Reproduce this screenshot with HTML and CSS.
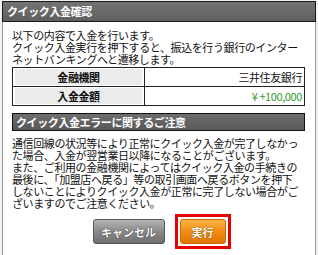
FILE: index.html
```html
<!DOCTYPE html>
<html lang="ja">
<head>
<meta charset="utf-8">
<link rel="stylesheet" href="styles.css">
</head>
<body>
<div class="dialog">
  <div class="title">クイック入金確認</div>
  <div class="panel">
    <p class="lead">以下の内容で入金を行います。<br>クイック入金実行を押下すると、振込を行う銀行のインター<br>ネットバンキングへと遷移します。</p>
    <table class="info">
      <tr><th><span>金融機関</span></th><td>三井住友銀行</td></tr>
      <tr><th><span>入金金額</span></th><td class="amount">¥ +100,000</td></tr>
    </table>
    <div class="section">クイック入金エラーに関するご注意</div>
    <p class="note">通信回線の状況等により正常にクイック入金が完了しなかっ<br>た場合、入金が翌営業日以降になることがございます。<br>また、ご利用の金融機関によってはクイック入金の手続きの<br>最後に、「加盟店へ戻る」等の取引画面へ戻るボタンを押下<br>しないことによりクイック入金が正常に完了しない場合がご<br>ざいますのでご注意ください。</p>
    <div class="buttons">
      <button class="btn cancel">キャンセル</button>
      <div class="highlight"><button class="btn exec">実行</button></div>
    </div>
  </div>
</div>
</body>
</html>
```
FILE: styles.css
```css
html, body {
  margin: 0;
  padding: 0;
}
body {
  background: #f2f2f2;
  font-family: "Noto Sans CJK JP", "DejaVu Sans", sans-serif;
  font-size: 11px;
  letter-spacing: -0.4px;
  color: #111;
}
.dialog {
  width: 314px;
  margin: 1px 0 0 2px;
}
.title {
  height: 19px;
  line-height: 19px;
  background: linear-gradient(#737373, #5f5f5f);
  border: 1px solid #1a1a1a;
  color: #fff;
  font-weight: bold;
  padding-left: 4px;
}
.panel {
  height: 229px;
  background: #fff;
  border: 1px solid #9a9a9a;
  border-top: none;
  padding: 7px 10px 0 9px;
  box-sizing: content-box;
}
.lead, .note {
  margin: 0;
  line-height: 12px;
}
.info {
  margin-top: 2px;
  width: 100%;
  border-collapse: collapse;
  border: 1px solid #222;
}
.info th, .info td {
  border: 1px solid #222;
  height: 16px;
  padding: 0;
  line-height: 16px;
}
.info th {
  width: 127px;
  padding: 1px 2px 1px 2px;
  font-weight: bold;
}
.info th span {
  display: block;
  background: #ececec;
  text-align: center;
}
.info td {
  text-align: right;
  padding-right: 2px;
}
.info td.amount {
  color: #2f9a2f;
}
.section {
  margin-top: 7px;
  height: 16px;
  line-height: 16px;
  background: linear-gradient(#6e6e6e, #575757);
  border: 1px solid #111;
  color: #fff;
  font-weight: bold;
  padding-left: 3px;
}
.note {
  margin-top: 6px;
}
.buttons {
  display: flex;
  justify-content: center;
  align-items: center;
  gap: 10px;
  margin-top: 5px;
  padding-left: 6px;
}
.btn {
  font-family: inherit;
  font-size: 11px;
  letter-spacing: 0;
  font-weight: bold;
  color: #fff;
  height: 25px;
  padding: 0;
  border-radius: 3px;
  text-shadow: 0 0 1px #333, 0 0 1px #333;
}
.cancel {
  width: 72px;
  background: linear-gradient(#b5b5b5, #8a8a8a 50%, #6f6f6f);
  border: 1px solid #555;
}
.highlight {
  border: 3px solid #e60000;
  padding: 2px;
  display: flex;
}
.exec {
  width: 46px;
  background: linear-gradient(#fbb445, #f08a10 55%, #e07400);
  border: 1px solid #c86a00;
  text-shadow: 0 0 1px #8a4a00, 0 0 1px #8a4a00;
}
```
